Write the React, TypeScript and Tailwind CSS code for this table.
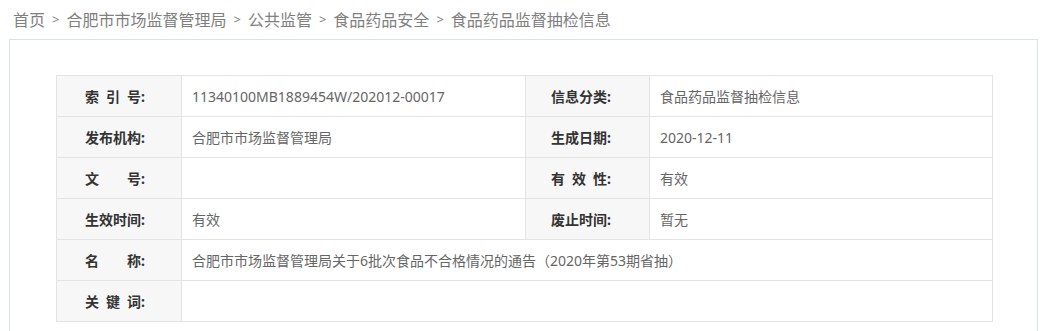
const crumbs = ["首页", "合肥市市场监督管理局", "公共监管", "食品药品安全", "食品药品监督抽检信息"];

const Label = ({ text, right }: { text: string; right?: boolean }) => (
  <td className={`bg-[#f7f7f7] border border-[#e3e3e3] font-bold text-[#333] ${right ? "pl-[25px]" : "pl-[28px]"}`}>
    <span className="inline-block w-[56px] text-justify [text-align-last:justify]">{text}</span>:
  </td>
);

const Value = ({ text, span }: { text: string; span?: number }) => (
  <td colSpan={span} className="border border-[#e3e3e3] pl-[10px] text-[#666]">
    {text}
  </td>
);

export default function App() {
  return (
    <div className="w-[1047px] h-[331px] overflow-hidden bg-white font-['Noto_Sans','Noto_Sans_CJK_SC',sans-serif]">
      {/* breadcrumb */}
      <div className="h-[39px] flex items-center pl-[13px] text-[16px] text-[#808080]">
        {crumbs.map((c, i) => (
          <span key={c} className="flex items-center">
            {i > 0 && <span className="mx-[7px] text-[13px]">&gt;</span>}
            {c}
          </span>
        ))}
      </div>

      <div className="ml-[9px] w-[1029px] h-[320px] border border-[#d5e3f1] pt-[35px] pl-[46px]">
        <table className="table-fixed border-collapse w-[936px] text-[14px]">
          <colgroup>
            <col className="w-[125px]" />
            <col className="w-[344px]" />
            <col className="w-[124px]" />
            <col className="w-[343px]" />
          </colgroup>
          <tbody>
            <tr className="h-[41px]">
              <Label text="索引号" />
              <Value text="11340100MB1889454W/202012-00017" />
              <Label right text="信息分类" />
              <Value text="食品药品监督抽检信息" />
            </tr>
            <tr className="h-[41px]">
              <Label text="发布机构" />
              <Value text="合肥市市场监督管理局" />
              <Label right text="生成日期" />
              <Value text="2020-12-11" />
            </tr>
            <tr className="h-[41px]">
              <Label text="文号" />
              <Value text="" />
              <Label right text="有效性" />
              <Value text="有效" />
            </tr>
            <tr className="h-[41px]">
              <Label text="生效时间" />
              <Value text="有效" />
              <Label right text="废止时间" />
              <Value text="暂无" />
            </tr>
            <tr className="h-[41px]">
              <Label text="名称" />
              <Value span={3} text="合肥市市场监督管理局关于6批次食品不合格情况的通告（2020年第53期省抽）" />
            </tr>
            <tr className="h-[41px]">
              <Label text="关键词" />
              <Value span={3} text="" />
            </tr>
          </tbody>
        </table>
      </div>
    </div>
  );
}
